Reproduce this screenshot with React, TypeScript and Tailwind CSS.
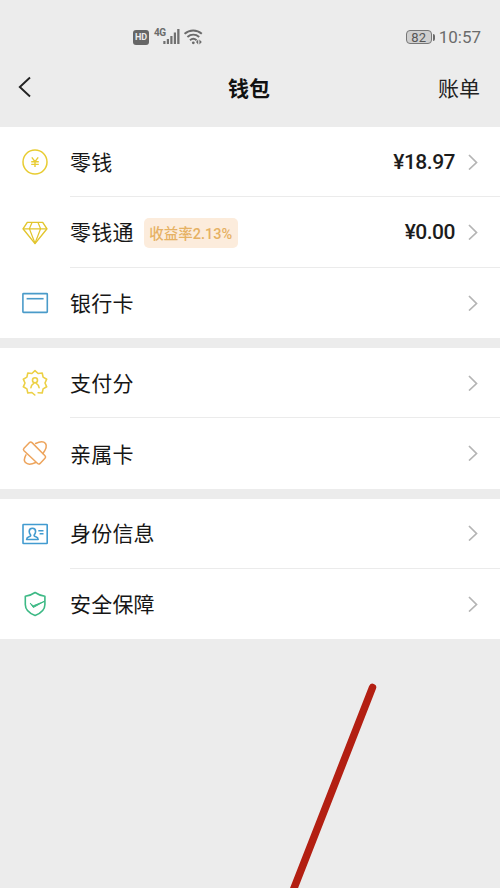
import type { ReactNode } from "react";

interface WalletRow {
  id: string;
  label: string;
  icon: ReactNode;
  tag?: string;
  amount?: string;
}

function CoinIcon() {
  return (
    <svg className="size-7" viewBox="0 0 28 28" fill="none" stroke="#e8cc32" strokeWidth={1.5} aria-hidden="true">
      <circle cx="14" cy="14" r="12" />
      <path strokeWidth={1.4} d="M10.8 9.4l3.2 4.2 3.2-4.2M10.2 13.800h7.6M10.2 16.4h7.6M14 13.6v5.400" />
    </svg>
  );
}

function DiamondIcon() {
  return (
    <svg
      className="mt-1 size-7"
      viewBox="0 0 28 28"
      fill="none"
      stroke="#e2c52c"
      strokeWidth={1.4}
      strokeLinejoin="round"
      aria-hidden="true"
    >
      <path d="M6.3 2.4h15.4L26 8.8 14 23.6 2 8.8z" />
      <path strokeWidth={1.2} d="M2 8.8h24M11 2.4L8.4 8.8 14 23.2l5.6-14.4L17 2.4" />
    </svg>
  );
}

function BankCardIcon() {
  return (
    <svg className="size-7" viewBox="0 0 28 28" fill="none" stroke="#4a9bc9" strokeWidth={1.6} aria-hidden="true">
      <rect x="1.9" y="4.6" width="24.4" height="18.8" rx="0.6" />
      <path d="M5.6 9.7h17" />
    </svg>
  );
}

function ScoreIcon() {
  return (
    <svg
      className="size-7"
      viewBox="0 0 28 28"
      fill="none"
      stroke="#ecd045"
      strokeWidth={1.6}
      strokeLinejoin="round"
      strokeLinecap="round"
      aria-hidden="true"
    >
      <path d="M17.1 23.7L21.2 24l.9-4.1 3.6-2.1L24 14l1.700-3.800-3.600-2.100-.900-4.100-4.100.5L14 1.700l-3.100 2.800-4.100-.5-.9 4.100-3.600 2.100L4 14l-1.700 3.800 3.600 2.100.9 4.100 4.100-.5L13.800 26" />
      <circle cx="14" cy="11.300" r="2.500" />
      <path d="M9.900 18.800c.2-2.400 1.700-3.800 3.100-4.700M18.100 18.800c-.2-2.400-1.700-3.800-3.100-4.700" />
    </svg>
  );
}

function FamilyCardIcon() {
  return (
    <svg
      className="size-7"
      viewBox="0 0 28 28"
      fill="none"
      stroke="#eda45c"
      strokeWidth={1.5}
      strokeLinejoin="round"
      strokeLinecap="round"
      aria-hidden="true"
    >
      <path d="M8.500 3.600L3 9.300q-1.200 1.300 0 2.500L16.600 24.500q1.300 1.100 2.500-.1L24 19.200q1.200-1.300 0-2.500L11 3.600q-1.300-1.200-2.500 0z" />
      <path d="M14.600 4.500c4-2 8.200-2.100 9.900 0 1.600 2.200.2 6.200-2.600 10" />
      <path d="M5 15.800c-1.700 3-2.100 6.200-.5 7.800 2 2.100 6.300 1.700 10.200-.1" />
    </svg>
  );
}

function IdentityIcon() {
  return (
    <svg className="size-7" viewBox="0 0 28 28" fill="none" stroke="#429bd0" strokeWidth={1.6} aria-hidden="true">
      <rect x="2" y="4.5" width="24.2" height="19" rx="0.5" />
      <path
        strokeLinejoin="round"
        d="M11.400 8.200c-2 0-3.200 1.400-3.200 3.300 0 1.600.7 2.600 1.400 3.500.3 1-.4 1.400-1.600 1.800-1.500.5-2.300 1-2.400 2.700h11.600c-.1-1.700-.9-2.200-2.400-2.700-1.200-.4-1.900-.8-1.600-1.800.7-.9 1.400-1.900 1.400-3.500 0-1.900-1.200-3.300-3.200-3.300z"
      />
      <path strokeWidth={1.4} d="M17.300 10.700h5.200M18.600 13.700h3.900" />
    </svg>
  );
}

function ShieldIcon() {
  return (
    <svg
      className="size-7"
      viewBox="0 0 28 28"
      fill="none"
      stroke="#3db985"
      strokeWidth={1.6}
      strokeLinejoin="round"
      aria-hidden="true"
    >
      <path d="M23.900 11.300V6.200C20.300 5.800 17 4.500 14.100 2.500 11.200 4.500 8 5.800 4.300 6.200v8.300c0 5.200 4 8.800 9.800 11 5.700-2.200 9.800-5.800 9.800-11v-3.200" />
      <path d="M9.200 13.200l3 2.600 11.500-4.600-11.400 6.300z" fill="#3db985" strokeWidth={1} />
    </svg>
  );
}

function Chevron() {
  return (
    <svg
      className="h-4 w-2.5 shrink-0"
      viewBox="0 0 10 16"
      fill="none"
      stroke="#b4b4b4"
      strokeWidth={1.7}
      aria-hidden="true"
    >
      <path d="M1 1l7.5 7.500L1 15.500" />
    </svg>
  );
}

const groups: WalletRow[][] = [
  [
    { id: "balance", label: "零钱", icon: <CoinIcon />, amount: "¥18.97" },
    { id: "fund", label: "零钱通", icon: <DiamondIcon />, tag: "收益率2.13%", amount: "¥0.00" },
    { id: "cards", label: "银行卡", icon: <BankCardIcon /> },
  ],
  [
    { id: "score", label: "支付分", icon: <ScoreIcon /> },
    { id: "family", label: "亲属卡", icon: <FamilyCardIcon /> },
  ],
  [
    { id: "identity", label: "身份信息", icon: <IdentityIcon /> },
    { id: "security", label: "安全保障", icon: <ShieldIcon /> },
  ],
];

function StatusBar() {
  return (
    <div className="flex h-[50px] items-center justify-between pt-6 pr-[19px] pl-[133px] text-[#6b6b6b]">
      <div className="flex items-center">
        <span className="flex h-[15px] w-4 items-center justify-center rounded-[3px] bg-[#666] text-[9px] leading-none font-bold text-[#ececec]">
          HD
        </span>
        <span className="mb-2 ml-[5px] w-[9px] font-['Liberation_Sans_Narrow','Roboto',sans-serif] text-[10px] leading-none font-bold tracking-tighter">
          4G
        </span>
        <svg className="h-4 w-[17px]" viewBox="0 0 17 16" fill="#707070" aria-hidden="true">
          <path d="M.3 12h2.200v3H.3zM3.800 10H6v5H3.800zM7.300 7h2.200v8H7.300zM10.800 3.500H13V15h-2.200zM14.200 0h2.300v15h-2.300z" />
        </svg>
        <svg
          className="ml-1 h-[18px] w-5"
          viewBox="0 0 20 18"
          fill="none"
          stroke="#6b6b6b"
          strokeWidth={1.9}
          aria-hidden="true"
        >
          <path d="M.6 5.800c4.900-4.400 12.300-4.400 17.200 0M3.400 9c3.500-3 8.300-3 11.800 0M6 12.200c1.900-1.700 4.700-1.700 6.600 0" />
          <circle cx="9.300" cy="14.800" r="1.400" fill="#6b6b6b" stroke="none" />
          <path d="M14.200 11.600L12 14l2.200 2.400zM15.400 11.600l2.400 2.400-2.400 2.400z" fill="#6b6b6b" stroke="none" />
        </svg>
      </div>
      <div className="flex items-center">
        <span className="flex h-[14px] w-[26px] items-center justify-center rounded-[4px] border border-[#777] bg-[#cfcfcf] text-[13px] leading-none text-[#555]">
          82
        </span>
        <span className="ml-px h-[7px] w-0.5 rounded-r bg-[#6b6b6b]" />
        <span className="ml-1 pt-px text-[17px] leading-none">10:57</span>
      </div>
    </div>
  );
}

function Row({ row, last }: { row: WalletRow; last: boolean }) {
  return (
    <li className="flex flex-1 items-stretch pl-[21px]">
      <span className="flex w-[49px] shrink-0 items-center">{row.icon}</span>
      <div className={`flex flex-1 items-center pr-[22px] ${last ? "" : "border-b border-[#ebebeb]"}`}>
        <span className="pt-1 text-[21px] tracking-[0.2px] text-[#161616]">{row.label}</span>
        {row.tag && (
          <span className="mt-0.5 ml-[10px] flex h-[30px] w-[94px] items-center justify-center rounded-[5px] bg-[#fcecdc] pt-1 text-[14.500px] font-medium text-[#e6b163]">
            {row.tag}
          </span>
        )}
        <span className="ml-auto pt-0.5 text-[21px] font-medium tracking-[-0.500px] text-[#1c1c1c]">{row.amount}</span>
        <span className="ml-[13px] flex">
          <Chevron />
        </span>
      </div>
    </li>
  );
}

export default function App() {
  return (
    <main className="relative h-[888px] w-[500px] overflow-hidden bg-[#ececec] font-[Roboto,'Noto_Sans_CJK_SC',sans-serif]">
      <StatusBar />
      <header className="grid h-[77px] grid-cols-3 items-center pr-5 pl-[18px]">
        <button type="button" aria-label="返回" className="justify-self-start pb-1">
          <svg
            className="h-[22px] w-[13px]"
            viewBox="0 0 13 22"
            fill="none"
            stroke="#222"
            strokeWidth={1.9}
            aria-hidden="true"
          >
            <path d="M12 1.500L1.800 11 12 20.500" />
          </svg>
        </button>
        <h1 className="justify-self-center pt-0.5 text-[21px] font-bold text-[#111]">钱包</h1>
        <button type="button" className="justify-self-end pt-0.5 text-[21px] text-[#222]">
          账单
        </button>
      </header>
      <div className="flex flex-col gap-2.5">
        {groups.map((rows) => (
          <ul
            key={rows[0].id}
            className={`flex flex-col bg-white ${rows.length === 3 ? "h-[211px]" : "h-[140.5px]"}`}
          >
            {rows.map((row, i) => (
              <Row key={row.id} row={row} last={i === rows.length - 1} />
            ))}
          </ul>
        ))}
      </div>
      <svg className="pointer-events-none absolute inset-0 size-full" viewBox="0 0 500 888" aria-hidden="true">
        <path d="M372.500 687.500L292.500 892" stroke="#b31f12" strokeWidth={7.500} strokeLinecap="round" />
      </svg>
    </main>
  );
}
